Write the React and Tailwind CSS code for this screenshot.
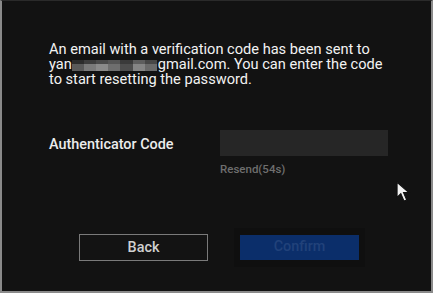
const mosaicTop = ["#2c2c2c", "#3d3d3d", "#4a4a4a", "#555555", "#3a3a3a", "#5e5e5e", "#474747"];
const mosaicBottom = ["#5a5a5a", "#7a7a7a", "#8a8a8a", "#6e6e6e", "#4d4d4d", "#858585", "#6a6a6a"];

// redaction blur drawn over the middle of the address
const Mosaic = () => (
  <span className="relative inline-block w-[86px]">
    <span className="absolute left-0 right-[1px] -top-[9px] h-[11px] flex flex-col">
      <span className="flex h-[4px]">
        {mosaicTop.map((c, i) => (
          <span key={i} className="flex-1" style={{ backgroundColor: c }} />
        ))}
      </span>
      <span className="flex h-[7px]">
        {mosaicBottom.map((c, i) => (
          <span key={i} className="flex-1" style={{ backgroundColor: c }} />
        ))}
      </span>
    </span>
  </span>
);

const Cursor = () => (
  <svg width="15" height="22" viewBox="0 0 14 20" className="absolute left-[394px] top-[180px]">
    <path d="M1 1 L1 15 L4.5 11.5 L7.5 18.5 L10 17.5 L7 10.5 L12 10.5 Z" fill="#f2f2f2" stroke="#111" strokeWidth="1" />
  </svg>
);

export default function App() {
  return (
    <div
      className="relative w-[433px] h-[293px] bg-[#121212] border-x-2 border-b-2 border-t border-[#8a8a8a] border-t-[#2a2a2a] overflow-hidden"
      style={{ fontFamily: "Roboto, 'Liberation Sans', sans-serif" }}
    >
      <div className="pl-[47px] pt-[41px]">
        <p className="text-[14.6px] leading-[15px] text-[#f2f2f2] whitespace-nowrap">
          An email with a verification code has been sent to
          <br />
          yan<Mosaic />gmail.com. You can enter the code
          <br />
          to start resetting the password.
        </p>

        <div className="flex mt-[43px]">
          <div className="w-[171px] pt-[4px] text-[14.4px] font-medium text-[#ececec]">Authenticator Code</div>
          <div className="flex flex-col">
            <div className="w-[168px] h-[26px] bg-[#262626]" />
            <div className="mt-[5px] text-[11.5px] font-medium text-[#6e6e6e]">Resend(54s)</div>
          </div>
        </div>

        <div className="flex gap-[32px] mt-[56px] ml-[30px]">
          <button className="w-[129px] h-[27px] border border-[#7a7a7a] bg-[#131313] text-[14.4px] font-medium text-[#d0d0d0]">
            Back
          </button>
          <div className="p-[6px] -m-[6px] bg-[#0f0f0f]">
            <button className="w-[119px] h-[25px] bg-[#0b2e6a] text-[14.4px] font-medium text-[#21427a]">
              Confirm
            </button>
          </div>
        </div>
      </div>
      <Cursor />
    </div>
  );
}
